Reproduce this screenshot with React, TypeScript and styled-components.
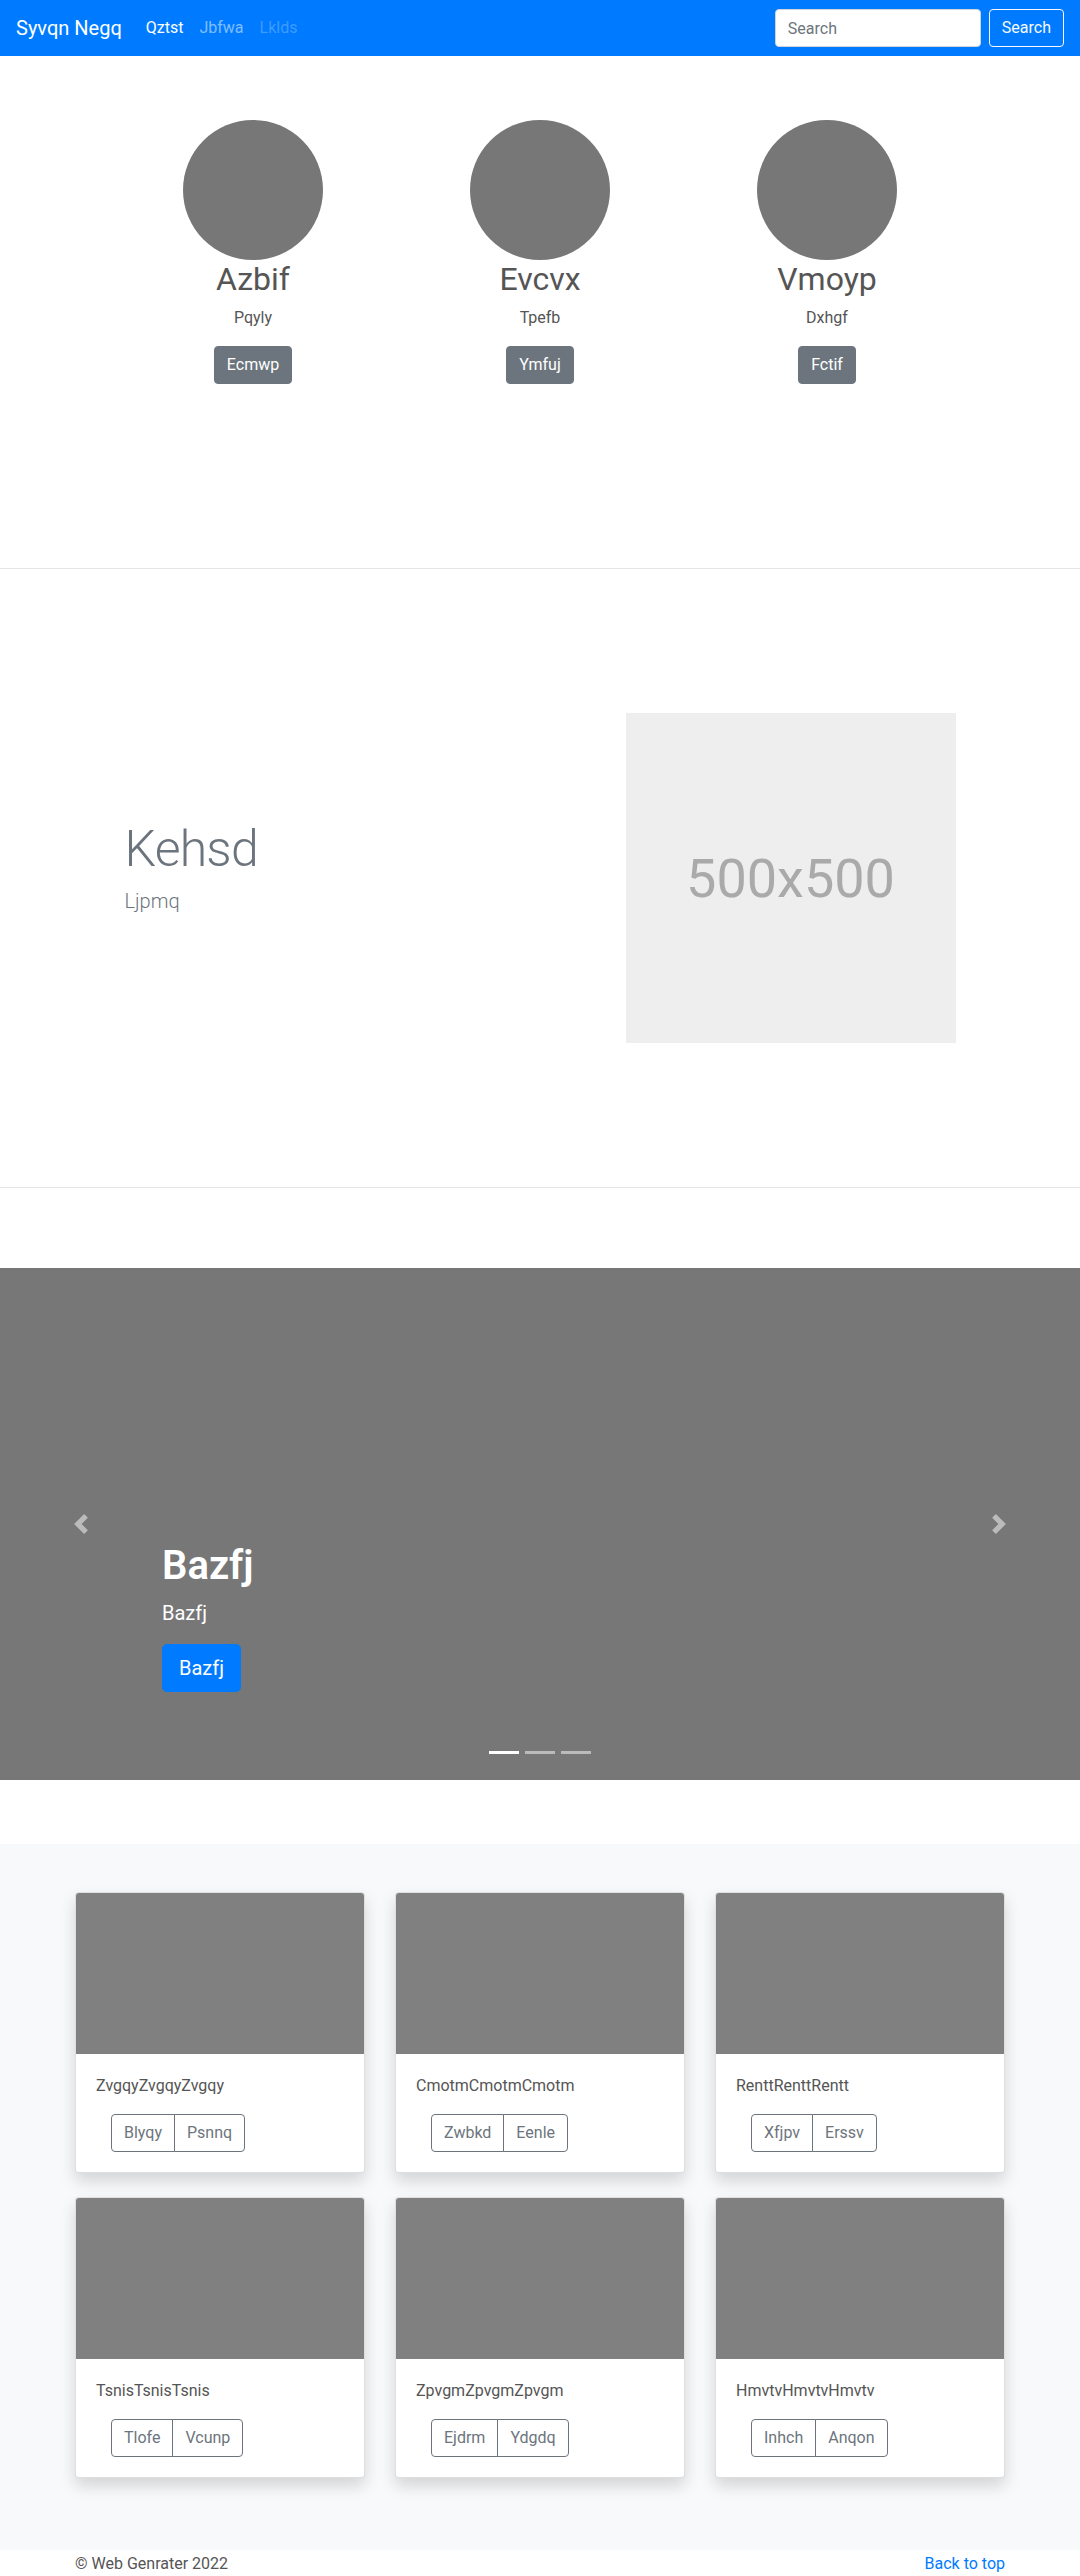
import React from "react";
import styled, { createGlobalStyle } from "styled-components";

const GlobalStyle = createGlobalStyle`
  *, *::before, *::after { box-sizing: border-box; }
  html, body { margin: 0; padding: 0; }
  body {
    font-family: "Segoe UI", Roboto, "Helvetica Neue", Arial, "Noto Sans", sans-serif;
    font-size: 16px;
    line-height: 1.5;
    color: #212529;
    background: #fff;
  }
`;

/* ---------- Navbar ---------- */
const Navbar = styled.header`
  display: flex;
  align-items: center;
  height: 56px;
  padding: 8px 16px;
  background: #007bff;
`;

const Brand = styled.a`
  font-size: 20px;
  line-height: 30px;
  padding: 5px 0;
  margin-right: 16px;
  color: #fff;
  text-decoration: none;
  white-space: nowrap;
`;

const NavList = styled.nav`
  display: flex;
  align-items: center;
`;

const NavLink = styled.a<{ $state: "active" | "idle" | "disabled" }>`
  padding: 8px;
  font-size: 16px;
  line-height: 24px;
  text-decoration: none;
  color: ${(p) =>
    p.$state === "active"
      ? "#fff"
      : p.$state === "idle"
      ? "rgba(255,255,255,.5)"
      : "rgba(255,255,255,.25)"};
`;

const SearchForm = styled.form`
  display: flex;
  align-items: center;
  gap: 8px;
  margin-left: auto;
`;

const SearchInput = styled.input`
  width: 206px;
  height: 38px;
  padding: 6px 12px;
  font: inherit;
  font-size: 16px;
  color: #495057;
  background: #fff;
  border: 1px solid #ced4da;
  border-radius: 4px;
  &::placeholder { color: #6c757d; }
`;

const OutlineLightButton = styled.button`
  height: 38px;
  padding: 6px 12px;
  font: inherit;
  font-size: 16px;
  line-height: 24px;
  color: #f8f9fa;
  background: transparent;
  border: 1px solid #f8f9fa;
  border-radius: 4px;
`;

/* ---------- Marketing ---------- */
const Marketing = styled.section`
  padding: 64px 0 184px;
`;

const MarketingGrid = styled.div`
  width: 861px;
  margin: 0 auto;
  display: grid;
  grid-template-columns: repeat(3, 1fr);
`;

const Person = styled.div`
  display: flex;
  flex-direction: column;
  align-items: center;
  text-align: center;
`;

const Avatar = styled.div`
  width: 140px;
  height: 140px;
  border-radius: 50%;
  background: #777;
`;

const PersonName = styled.h2`
  margin: 0 0 8px;
  font-size: 32px;
  font-weight: 400;
  line-height: 1.2;
  color: #555;
`;

const PersonRole = styled.p`
  margin: 0 0 16px;
  color: #555;
`;

const SecondaryButton = styled.button`
  padding: 6px 12px;
  font: inherit;
  font-size: 16px;
  line-height: 24px;
  color: #fff;
  background: #6c757d;
  border: 1px solid #6c757d;
  border-radius: 4px;
`;

const Divider = styled.hr`
  margin: 0;
  border: 0;
  border-top: 1px solid rgba(0, 0, 0, 0.1);
`;

/* ---------- Featurette ---------- */
const Featurette = styled.section`
  padding: 144px 0;
`;

const FeaturetteRow = styled.div`
  width: 831px;
  margin: 0 auto;
  display: flex;
  align-items: center;
  justify-content: space-between;
`;

const FeatureText = styled.div``;

const FeatureHeading = styled.h2`
  margin: 0 0 12px;
  font-size: 50px;
  font-weight: 300;
  line-height: 1;
  letter-spacing: -0.8px;
  color: #6c757d;
`;

const Lead = styled.p`
  margin: 0 0 16px;
  font-size: 20px;
  line-height: 30px;
  font-weight: 300;
  color: #6c757d;
`;

const Placeholder = styled.div`
  width: 330px;
  height: 330px;
  display: flex;
  align-items: center;
  justify-content: center;
  background: #eee;
  color: #aaa;
  font-size: 54px;
`;

/* ---------- Carousel ---------- */
const Carousel = styled.section`
  position: relative;
  height: 512px;
  margin: 80px 0 64px;
  background: #777;
`;

const Control = styled.a<{ $side: "left" | "right" }>`
  position: absolute;
  top: 0;
  bottom: 0;
  ${(p) => (p.$side === "left" ? "left: 0;" : "right: 0;")}
  width: 15%;
  display: flex;
  align-items: center;
  justify-content: center;
  opacity: 0.5;
`;

const Caption = styled.div`
  position: absolute;
  left: 15%;
  right: 15%;
  bottom: 52px;
  padding: 20px 0;
  color: #fff;
  text-align: left;
`;

const CaptionTitle = styled.h1`
  margin: 0 0 8px;
  font-size: 40px;
  font-weight: 600;
  line-height: 1.2;
`;

const CaptionText = styled.p`
  margin: 0 0 16px;
  font-size: 20px;
  line-height: 30px;
`;

const PrimaryButtonLg = styled.a`
  display: inline-block;
  padding: 8px 16px;
  font-size: 20px;
  line-height: 30px;
  color: #fff;
  background: #007bff;
  border: 1px solid #007bff;
  border-radius: 4.8px;
  text-decoration: none;
`;

const Indicators = styled.ol`
  position: absolute;
  left: 0;
  right: 0;
  bottom: 0;
  margin: 0 0 16px;
  padding: 0;
  list-style: none;
  display: flex;
  justify-content: center;
`;

const Indicator = styled.li<{ $active?: boolean }>`
  width: 30px;
  height: 3px;
  margin: 0 3px;
  box-sizing: content-box;
  border-top: 10px solid transparent;
  border-bottom: 10px solid transparent;
  background-clip: padding-box;
  background-color: #fff;
  opacity: ${(p) => (p.$active ? 1 : 0.5)};
`;

/* ---------- Album ---------- */
const Album = styled.section`
  background: #f8f9fa;
  padding: 48px 0 72px;
`;

const Container = styled.div`
  width: 960px;
  margin: 0 auto;
  padding: 0 15px;
`;

const CardGrid = styled.div`
  display: grid;
  grid-template-columns: repeat(3, 1fr);
  column-gap: 30px;
  row-gap: 24px;
`;

const Card = styled.article`
  display: flex;
  flex-direction: column;
  background: #fff;
  border: 1px solid rgba(0, 0, 0, 0.125);
  border-radius: 4px;
  overflow: hidden;
  box-shadow: 0 8px 16px rgba(0, 0, 0, 0.15);
`;

const CardImage = styled.div`
  height: 161px;
  background: #808080;
`;

const CardBody = styled.div`
  padding: 20px;
`;

const CardText = styled.p`
  margin: 0 0 16px;
  color: #555;
`;

const ButtonGroup = styled.div`
  display: inline-flex;
  margin-left: 15px;
`;

const GroupButton = styled.button`
  padding: 6px 12px;
  font: inherit;
  font-size: 16px;
  line-height: 24px;
  color: #6c757d;
  background: transparent;
  border: 1px solid #6c757d;
  border-radius: 0;
  &:first-child { border-radius: 4px 0 0 4px; }
  &:last-child { margin-left: -1px; border-radius: 0 4px 4px 0; }
`;

/* ---------- Footer ---------- */
const Footer = styled.footer`
  width: 960px;
  margin: 0 auto;
  padding: 2px 15px 0;
  display: flex;
  justify-content: space-between;
`;

const FooterText = styled.p`
  margin: 0 0 16px;
  color: #555;
`;

const FooterLink = styled.a`
  color: #007bff;
  text-decoration: none;
`;

const Chevron = ({ dir }: { dir: "left" | "right" }) => (
  <svg width="20" height="20" viewBox="0 0 8 8" fill="#fff" aria-hidden="true">
    {dir === "left" ? (
      <path d="M5.25 0l-4 4 4 4 1.5-1.5L4.25 4l2.5-2.5L5.25 0z" />
    ) : (
      <path d="M2.75 0l-1.5 1.5L3.75 4l-2.5 2.5L2.75 8l4-4-4-4z" />
    )}
  </svg>
);

const people = [
  { name: "Azbif", role: "Pqyly", action: "Ecmwp" },
  { name: "Evcvx", role: "Tpefb", action: "Ymfuj" },
  { name: "Vmoyp", role: "Dxhgf", action: "Fctif" },
];

const cards = [
  { text: "ZvgqyZvgqyZvgqy", a: "Blyqy", b: "Psnnq" },
  { text: "CmotmCmotmCmotm", a: "Zwbkd", b: "Eenle" },
  { text: "RenttRenttRentt", a: "Xfjpv", b: "Erssv" },
  { text: "TsnisTsnisTsnis", a: "Tlofe", b: "Vcunp" },
  { text: "ZpvgmZpvgmZpvgm", a: "Ejdrm", b: "Ydgdq" },
  { text: "HmvtvHmvtvHmvtv", a: "Inhch", b: "Anqon" },
];

export default function App() {
  return (
    <>
      <GlobalStyle />
      <Navbar>
        <Brand href="#">Syvqn Negq</Brand>
        <NavList>
          <NavLink href="#" $state="active">Qztst</NavLink>
          <NavLink href="#" $state="idle">Jbfwa</NavLink>
          <NavLink href="#" $state="disabled">Lklds</NavLink>
        </NavList>
        <SearchForm onSubmit={(e) => e.preventDefault()}>
          <SearchInput type="text" placeholder="Search" aria-label="Search" />
          <OutlineLightButton type="submit">Search</OutlineLightButton>
        </SearchForm>
      </Navbar>

      <Marketing>
        <MarketingGrid>
          {people.map((p) => (
            <Person key={p.name}>
              <Avatar />
              <PersonName>{p.name}</PersonName>
              <PersonRole>{p.role}</PersonRole>
              <SecondaryButton>{p.action}</SecondaryButton>
            </Person>
          ))}
        </MarketingGrid>
      </Marketing>

      <Divider />

      <Featurette>
        <FeaturetteRow>
          <FeatureText>
            <FeatureHeading>Kehsd</FeatureHeading>
            <Lead>Ljpmq</Lead>
          </FeatureText>
          <Placeholder>500x500</Placeholder>
        </FeaturetteRow>
      </Featurette>

      <Divider />

      <Carousel>
        <Control href="#" $side="left">
          <Chevron dir="left" />
        </Control>
        <Control href="#" $side="right">
          <Chevron dir="right" />
        </Control>
        <Caption>
          <CaptionTitle>Bazfj</CaptionTitle>
          <CaptionText>Bazfj</CaptionText>
          <CaptionText>
            <PrimaryButtonLg href="#">Bazfj</PrimaryButtonLg>
          </CaptionText>
        </Caption>
        <Indicators>
          <Indicator $active />
          <Indicator />
          <Indicator />
        </Indicators>
      </Carousel>

      <Album>
        <Container>
          <CardGrid>
            {cards.map((c) => (
              <Card key={c.text}>
                <CardImage />
                <CardBody>
                  <CardText>{c.text}</CardText>
                  <ButtonGroup>
                    <GroupButton>{c.a}</GroupButton>
                    <GroupButton>{c.b}</GroupButton>
                  </ButtonGroup>
                </CardBody>
              </Card>
            ))}
          </CardGrid>
        </Container>
      </Album>

      <Footer>
        <FooterText>© Web Genrater 2022</FooterText>
        <FooterText>
          <FooterLink href="#">Back to top</FooterLink>
        </FooterText>
      </Footer>
    </>
  );
}
